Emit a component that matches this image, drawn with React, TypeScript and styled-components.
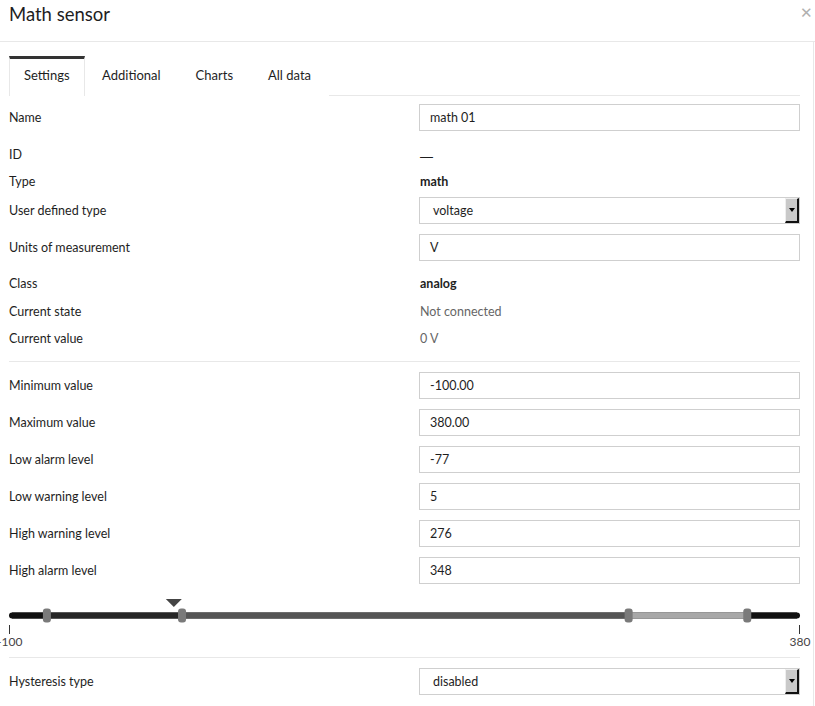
import React from "react";
import styled, { createGlobalStyle } from "styled-components";

const Global = createGlobalStyle`
  html, body { margin: 0; padding: 0; background: #fff; }
  body { font-family: Lato, "Open Sans", "Liberation Sans", sans-serif; color: #1e1e1e; }
  * { box-sizing: border-box; }
`;

const Page = styled.div`
  width: 815px;
  height: 706px;
  overflow: hidden;
  background: #fff;
`;

const Header = styled.div`
  height: 42px;
  display: flex;
  align-items: flex-start;
  justify-content: space-between;
  padding: 0 2px 0 9px;
  border-bottom: 1px solid #e8e8e8;
`;

const Title = styled.h1`
  margin: 0;
  padding-top: 5px;
  font-size: 18.5px;
  font-weight: 400;
  color: #1e1e1e;
  line-height: 1;
`;

const Close = styled.span`
  font-size: 15px;
  color: #b0b0b0;
  margin-top: 5px;
  line-height: 1;
`;

const Body = styled.div`
  margin-right: 1px;
  border-right: 1px solid #e8e8e8;
  padding: 14px 13px 0 9px;
  height: 664px;
`;

const TabBar = styled.div`
  display: flex;
  height: 40px;
  border-bottom: 1px solid #e8e8e8;
`;

const Tab = styled.div<{ $active?: boolean }>`
  display: flex;
  align-items: center;
  padding: ${(p) => (p.$active ? "0 14px 5px" : "0 16.5px 5px")};
  font-size: 13px;
  color: #1e1e1e;
  background: #fff;
  border-top: 3px solid ${(p) => (p.$active ? "#333" : "transparent")};
  border-left: 1px solid ${(p) => (p.$active ? "#e8e8e8" : "transparent")};
  border-right: 1px solid ${(p) => (p.$active ? "#e8e8e8" : "transparent")};
  margin-bottom: -1px;
  height: 40px;
`;

const Form = styled.div`
  display: flex;
  flex-direction: column;
  padding-top: 8px;
`;

const Row = styled.div<{ $h?: number; $mb?: number }>`
  display: grid;
  grid-template-columns: 410px 1fr;
  align-items: center;
  min-height: ${(p) => p.$h ?? 27}px;
  margin-bottom: ${(p) => p.$mb ?? 0}px;
`;

const Label = styled.div`
  font-size: 12.5px;
  color: #1e1e1e;
`;

const Value = styled.div<{ $bold?: boolean; $muted?: boolean }>`
  font-size: 12.5px;
  font-weight: ${(p) => (p.$bold ? 700 : 400)};
  color: ${(p) => (p.$muted ? "#666" : "#1e1e1e")};
  padding-left: 1px;
`;

const Dash = styled.span`
  font-family: "Liberation Sans", Arial, sans-serif;
  font-size: 13px;
  display: inline-block;
  transform: translateY(2px);
`;

const Input = styled.div`
  height: 27px;
  border: 1px solid #cfcfcf;
  display: flex;
  align-items: center;
  padding-left: 10px;
  font-size: 12.5px;
  color: #1e1e1e;
`;

const SelectBox = styled.div`
  height: 27px;
  border: 1px solid #cfcfcf;
  display: flex;
  align-items: center;
  justify-content: space-between;
  padding: 0 0 0 13px;
  font-size: 12.5px;
  color: #1e1e1e;
`;

const DropButton = styled.div`
  width: 14px;
  height: 25px;
  background: #c9c9c9;
  border-top: 1px solid #eee;
  border-left: 1px solid #eee;
  border-right: 2px solid #111;
  border-bottom: 2px solid #111;
  display: flex;
  align-items: center;
  justify-content: center;
  &::after {
    content: "";
    border-left: 3px solid transparent;
    border-right: 3px solid transparent;
    border-top: 4px solid #000;
  }
`;

const Divider = styled.hr<{ $mt?: number; $mb?: number }>`
  border: none;
  border-top: 1px solid #e8e8e8;
  margin: ${(p) => p.$mt ?? 0}px 0 ${(p) => p.$mb ?? 0}px 0;
  height: 0;
`;

const SliderWrap = styled.div`
  margin-top: 15px;
  display: flex;
  flex-direction: column;
`;

const Ticks = styled.div`
  display: flex;
  justify-content: space-between;
  height: 9px;
`;

const TickLine = styled.div`
  width: 1px;
  height: 9px;
  background: #333;
`;

const TickLabels = styled.div`
  display: flex;
  justify-content: space-between;
  margin: 1px -12px 0 -12px;
  font-size: 12px;
  color: #444;
  line-height: 14px;
`;

const TickLabel = styled.span`
  width: 24px;
  text-align: center;
`;

const MIN = -100;
const MAX = 380;
const W = 791;
const pos = (v: number) => ((v - MIN) / (MAX - MIN)) * W;

function Slider() {
  const lowAlarm = pos(-77);
  const lowWarn = pos(5);
  const highWarn = pos(276);
  const highAlarm = pos(348);
  const cur = pos(0);
  const ty = 16.5;
  const segs: [number, number, string][] = [
    [0, lowAlarm, "#111"],
    [lowAlarm, lowWarn, "#262626"],
    [lowWarn, highWarn, "#555"],
    [highWarn, highAlarm, "#a8a8a8"],
    [highAlarm, W, "#111"],
  ];
  return (
    <SliderWrap>
      <svg width={W} height={26} viewBox={`0 0 ${W} 26`} style={{ display: "block", overflow: "visible" }}>
        <line x1={3} y1={ty} x2={W - 3} y2={ty} stroke="#111" strokeWidth={6} strokeLinecap="round" />
        {segs.map(([a, b, c], i) => (
          <line key={i} x1={Math.max(a, 3)} y1={ty} x2={Math.min(b, W - 3)} y2={ty} stroke={c} strokeWidth={6} />
        ))}
        {[lowAlarm, lowWarn, highWarn, highAlarm].map((x, i) => (
          <rect key={i} x={x - 4} y={ty - 7} width={8} height={14} rx={3} fill="#7a7a7a" />
        ))}
        <polygon points={`${cur - 8},0 ${cur + 8},0 ${cur},8`} fill="#444" />
      </svg>
      <Ticks>
        <TickLine />
        <TickLine />
      </Ticks>
      <TickLabels>
        <TickLabel>-100</TickLabel>
        <TickLabel>380</TickLabel>
      </TickLabels>
    </SliderWrap>
  );
}

function Select({ value }: { value: string }) {
  return (
    <SelectBox>
      <span>{value}</span>
      <DropButton />
    </SelectBox>
  );
}

export default function App() {
  return (
    <Page>
      <Global />
      <Header>
        <Title>Math sensor</Title>
        <Close>✕</Close>
      </Header>
      <Body>
        <TabBar>
          <Tab $active>Settings</Tab>
          <Tab>Additional</Tab>
          <Tab>Charts</Tab>
          <Tab>All data</Tab>
        </TabBar>
        <Form>
          <Row $mb={10}>
            <Label>Name</Label>
            <Input>math 01</Input>
          </Row>
          <Row>
            <Label>ID</Label>
            <Value>
              <Dash>—</Dash>
            </Value>
          </Row>
          <Row $mb={2}>
            <Label>Type</Label>
            <Value $bold>math</Value>
          </Row>
          <Row $mb={10}>
            <Label>User defined type</Label>
            <Select value="voltage" />
          </Row>
          <Row $mb={8}>
            <Label>Units of measurement</Label>
            <Input>V</Input>
          </Row>
          <Row $h={28}>
            <Label>Class</Label>
            <Value $bold>analog</Value>
          </Row>
          <Row $h={28}>
            <Label>Current state</Label>
            <Value $muted>Not connected</Value>
          </Row>
          <Row $h={27}>
            <Label>Current value</Label>
            <Value $muted>0 V</Value>
          </Row>
          <Divider $mt={9} $mb={10} />
          <Row $mb={10}>
            <Label>Minimum value</Label>
            <Input>-100.00</Input>
          </Row>
          <Row $mb={10}>
            <Label>Maximum value</Label>
            <Input>380.00</Input>
          </Row>
          <Row $mb={10}>
            <Label>Low alarm level</Label>
            <Input>-77</Input>
          </Row>
          <Row $mb={10}>
            <Label>Low warning level</Label>
            <Input>5</Input>
          </Row>
          <Row $mb={10}>
            <Label>High warning level</Label>
            <Input>276</Input>
          </Row>
          <Row>
            <Label>High alarm level</Label>
            <Input>348</Input>
          </Row>
          <Slider />
          <Divider $mt={8} $mb={10} />
          <Row>
            <Label>Hysteresis type</Label>
            <Select value="disabled" />
          </Row>
        </Form>
      </Body>
    </Page>
  );
}
